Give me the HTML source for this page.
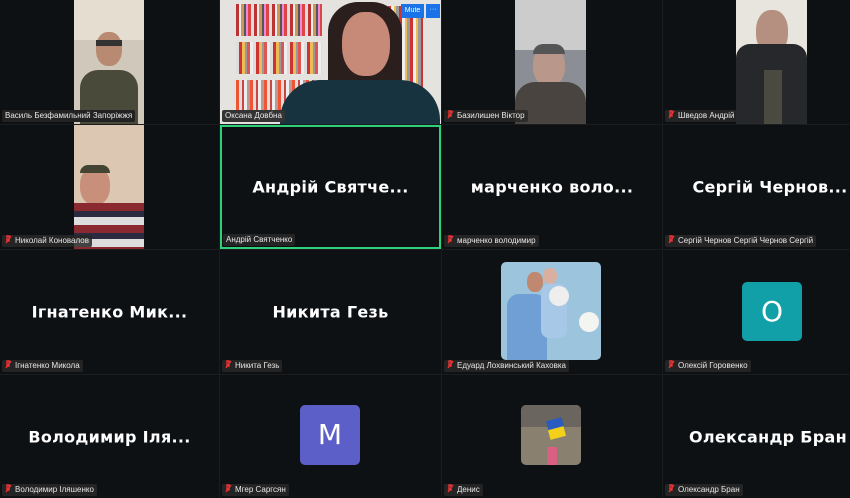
<!DOCTYPE html>
<html><head><meta charset="utf-8"><style>
*{margin:0;padding:0;box-sizing:border-box}
body{width:850px;height:498px;background:#1b1c1d;position:relative;overflow:hidden;font-family:"Liberation Sans","DejaVu Sans",sans-serif}
.t{position:absolute;background:#0e1114;overflow:hidden}
.v{position:absolute}
.lbl{position:absolute;left:2px;bottom:2px;height:12px;padding:0 3px;background:rgba(40,40,40,.85);color:#e8e8e8;font-size:8px;line-height:12px;white-space:nowrap;border-radius:2px}
.mic{display:inline-block;width:7px;height:9px;vertical-align:-1px;margin-right:3px}
.big{position:absolute;left:0;right:0;top:50%;transform:translateY(-50%);text-align:center;color:#fff;font-weight:bold;font-size:16px;white-space:nowrap;font-family:"DejaVu Sans",sans-serif;letter-spacing:.3px}
.av{position:absolute;border-radius:5px;color:#fff;font-size:28px;text-align:center;font-family:"DejaVu Sans",sans-serif}
.hd{position:absolute;border-radius:45%}
</style></head><body>
<!-- row 0 -->
<div class="t" style="left:0;top:0;width:219px;height:124px">
 <div class="v" style="left:74px;top:0;width:70px;height:124px;background:#cfc8bb">
  <div class="v" style="left:0;top:0;width:70px;height:40px;background:#e4ddd0"></div>
  <div class="hd" style="left:22px;top:32px;width:26px;height:34px;background:#b98a72"></div>
  <div class="v" style="left:22px;top:40px;width:26px;height:6px;background:#333"></div>
  <div class="v" style="left:6px;top:70px;width:58px;height:54px;background:#4a4a3a;border-radius:18px 18px 0 0"></div>
 </div>
 <div class="lbl" style="background:#222">Василь Безфамильний Запоріжжя</div>
</div>
<div class="t" style="left:220px;top:0;width:221px;height:124px;background:#e5e3e0">
 <div class="v" style="left:16px;top:4px;width:86px;height:32px;background:repeating-linear-gradient(90deg,#b33 0 3px,#eee 3px 5px,#c95 5px 8px,#555 8px 10px,#e8d 10px 12px,#d44 12px 15px,#ddd 15px 18px)"></div>
 <div class="v" style="left:16px;top:42px;width:86px;height:32px;background:repeating-linear-gradient(90deg,#ddd 0 3px,#c33 3px 6px,#eb5 6px 9px,#999 9px 11px,#d55 11px 14px,#eee 14px 17px)"></div>
 <div class="v" style="left:16px;top:80px;width:86px;height:34px;background:repeating-linear-gradient(90deg,#e53 0 3px,#ddd 3px 6px,#c44 6px 8px,#eee 8px 11px,#b99 11px 14px)"></div>
 <div class="v" style="left:168px;top:6px;width:35px;height:106px;background:repeating-linear-gradient(90deg,#c33 0 3px,#eee 3px 6px,#eb5 6px 8px,#999 8px 11px)"></div>
 <div class="v" style="left:108px;top:2px;width:74px;height:122px;background:#2a1f1c;border-radius:30px 30px 0 0"></div>
 <div class="hd" style="left:122px;top:12px;width:48px;height:64px;background:#c88a78"></div>
 <div class="v" style="left:60px;top:80px;width:160px;height:46px;background:#17333f;border-radius:40px 40px 0 0"></div>
 <div class="v" style="left:181px;top:4px;width:23px;height:14px;background:#1a73e8;color:#fff;font-size:7px;line-height:14px;text-align:center">Mute</div>
 <div class="v" style="left:206px;top:4px;width:14px;height:14px;background:#1a73e8;color:#fff;font-size:7px;line-height:12px;text-align:center">···</div>
 <div class="lbl" style="background:#333">Оксана Довбна</div>
</div>
<div class="t" style="left:442px;top:0;width:220px;height:124px">
 <div class="v" style="left:73px;top:0;width:71px;height:124px;background:#ccc">
  <div class="v" style="left:0;top:50px;width:71px;height:74px;background:#8b8f95"></div>
  <div class="hd" style="left:18px;top:46px;width:32px;height:40px;background:#b9978a"></div>
  <div class="v" style="left:18px;top:44px;width:32px;height:10px;background:#555;border-radius:10px 10px 0 0"></div>
  <div class="v" style="left:0;top:82px;width:71px;height:42px;background:#4a4440;border-radius:20px 20px 0 0"></div>
 </div>
 <div class="lbl"><svg class="mic" viewBox="0 0 7 9"><path d="M1 8L6 1M2 1h2v5h-2z" stroke="#e33" stroke-width="1.4" fill="none"/></svg>Базилишен Віктор</div>
</div>
<div class="t" style="left:663px;top:0;width:187px;height:124px">
 <div class="v" style="left:73px;top:0;width:71px;height:124px;background:#e8e4de">
  <div class="hd" style="left:20px;top:10px;width:32px;height:44px;background:#b58f80"></div>
  <div class="v" style="left:0;top:44px;width:71px;height:80px;background:#26282b;border-radius:14px 14px 0 0"></div>
  <div class="v" style="left:28px;top:70px;width:18px;height:54px;background:#4a4a40"></div>
 </div>
 <div class="lbl"><svg class="mic" viewBox="0 0 7 9"><path d="M1 8L6 1M2 1h2v5h-2z" stroke="#e33" stroke-width="1.4" fill="none"/></svg>Шведов Андрій</div>
</div>
<!-- row 1 -->
<div class="t" style="left:0;top:125px;width:219px;height:124px">
 <div class="v" style="left:74px;top:0;width:70px;height:124px;background:#dcc8b2">
  <div class="hd" style="left:6px;top:42px;width:30px;height:38px;background:#c8907a"></div>
  <div class="v" style="left:6px;top:40px;width:30px;height:8px;background:#443;border-radius:10px 10px 0 0"></div>
  <div class="v" style="left:0;top:78px;width:70px;height:46px;background:repeating-linear-gradient(180deg,#8a2a30 0 8px,#2a2a40 8px 14px,#ddd 14px 22px)"></div>
 </div>
 <div class="lbl"><svg class="mic" viewBox="0 0 7 9"><path d="M1 8L6 1M2 1h2v5h-2z" stroke="#e33" stroke-width="1.4" fill="none"/></svg>Николай Коновалов</div>
</div>
<div class="t" style="left:220px;top:125px;width:221px;height:124px;border:2px solid #2ed17a">
 <div class="big">Андрій Святче...</div>
 <div class="lbl" style="left:1px;bottom:1px">Андрій Святченко</div>
</div>
<div class="t" style="left:442px;top:125px;width:220px;height:124px">
 <div class="big">марченко  воло...</div>
 <div class="lbl"><svg class="mic" viewBox="0 0 7 9"><path d="M1 8L6 1M2 1h2v5h-2z" stroke="#e33" stroke-width="1.4" fill="none"/></svg>марченко володимир</div>
</div>
<div class="t" style="left:663px;top:125px;width:187px;height:124px">
 <div class="big" style="left:0;width:214px;right:auto">Сергій  Чернов...</div>
 <div class="lbl"><svg class="mic" viewBox="0 0 7 9"><path d="M1 8L6 1M2 1h2v5h-2z" stroke="#e33" stroke-width="1.4" fill="none"/></svg>Сергій Чернов Сергій Чернов Сергій</div>
</div>
<!-- row 2 -->
<div class="t" style="left:0;top:250px;width:219px;height:124px">
 <div class="big">Ігнатенко  Мик...</div>
 <div class="lbl"><svg class="mic" viewBox="0 0 7 9"><path d="M1 8L6 1M2 1h2v5h-2z" stroke="#e33" stroke-width="1.4" fill="none"/></svg>Ігнатенко Микола</div>
</div>
<div class="t" style="left:220px;top:250px;width:221px;height:124px">
 <div class="big">Никита Гезь</div>
 <div class="lbl"><svg class="mic" viewBox="0 0 7 9"><path d="M1 8L6 1M2 1h2v5h-2z" stroke="#e33" stroke-width="1.4" fill="none"/></svg>Никита Гезь</div>
</div>
<div class="t" style="left:442px;top:250px;width:220px;height:124px">
 <div class="v" style="left:59px;top:12px;width:100px;height:98px;background:#9cc4dc;border-radius:5px;overflow:hidden">
  <div class="hd" style="left:26px;top:10px;width:16px;height:20px;background:#c08870"></div>
  <div class="v" style="left:6px;top:32px;width:40px;height:66px;background:#6f9fd4;border-radius:12px 12px 0 0"></div>
  <div class="hd" style="left:42px;top:6px;width:14px;height:16px;background:#d9b0a0"></div>
  <div class="v" style="left:40px;top:22px;width:26px;height:54px;background:#a8c8e8;border-radius:8px"></div>
  <div class="v" style="left:48px;top:24px;width:20px;height:20px;background:#eee;border-radius:50%"></div>
  <div class="v" style="left:78px;top:50px;width:20px;height:20px;background:#f4f4f0;border-radius:50%"></div>
 </div>
 <div class="lbl"><svg class="mic" viewBox="0 0 7 9"><path d="M1 8L6 1M2 1h2v5h-2z" stroke="#e33" stroke-width="1.4" fill="none"/></svg>Едуард Лохвинський Каховка</div>
</div>
<div class="t" style="left:663px;top:250px;width:187px;height:124px">
 <div class="av" style="left:79px;top:32px;width:60px;height:59px;background:#12a0a8;line-height:59px">O</div>
 <div class="lbl"><svg class="mic" viewBox="0 0 7 9"><path d="M1 8L6 1M2 1h2v5h-2z" stroke="#e33" stroke-width="1.4" fill="none"/></svg>Олексій Горовенко</div>
</div>
<!-- row 3 -->
<div class="t" style="left:0;top:375px;width:219px;height:123px">
 <div class="big">Володимир Іля...</div>
 <div class="lbl"><svg class="mic" viewBox="0 0 7 9"><path d="M1 8L6 1M2 1h2v5h-2z" stroke="#e33" stroke-width="1.4" fill="none"/></svg>Володимир Іляшенко</div>
</div>
<div class="t" style="left:220px;top:375px;width:221px;height:123px">
 <div class="av" style="left:80px;top:30px;width:60px;height:60px;background:#5b5fc7;line-height:60px">M</div>
 <div class="lbl"><svg class="mic" viewBox="0 0 7 9"><path d="M1 8L6 1M2 1h2v5h-2z" stroke="#e33" stroke-width="1.4" fill="none"/></svg>Мгер Саргсян</div>
</div>
<div class="t" style="left:442px;top:375px;width:220px;height:123px">
 <div class="v" style="left:79px;top:30px;width:60px;height:60px;background:#8a8070;border-radius:5px;overflow:hidden">
  <div class="v" style="left:0;top:0;width:60px;height:22px;background:#6a655e"></div>
  <div class="v" style="left:26px;top:14px;width:16px;height:10px;background:#2a5cc0;transform:rotate(-15deg)"></div>
  <div class="v" style="left:28px;top:23px;width:16px;height:10px;background:#f3d01a;transform:rotate(-15deg)"></div>
  <div class="v" style="left:26px;top:42px;width:10px;height:18px;background:#d86080"></div>
 </div>
 <div class="lbl"><svg class="mic" viewBox="0 0 7 9"><path d="M1 8L6 1M2 1h2v5h-2z" stroke="#e33" stroke-width="1.4" fill="none"/></svg>Денис</div>
</div>
<div class="t" style="left:663px;top:375px;width:187px;height:123px">
 <div class="big" style="text-align:right;right:3px">Олександр Бран</div>
 <div class="lbl"><svg class="mic" viewBox="0 0 7 9"><path d="M1 8L6 1M2 1h2v5h-2z" stroke="#e33" stroke-width="1.4" fill="none"/></svg>Олександр Бран</div>
</div>
</body></html>
